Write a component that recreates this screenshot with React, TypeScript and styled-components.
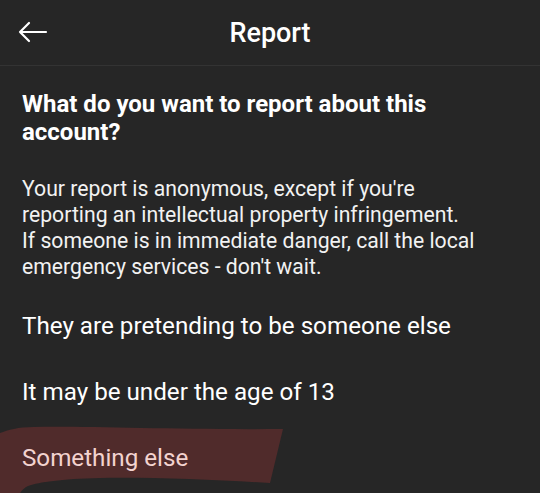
import styled, { createGlobalStyle } from 'styled-components';

const GlobalStyle = createGlobalStyle`
  html, body {
    margin: 0;
    padding: 0;
    background: #262626;
  }
  body {
    font-family: Roboto, "Noto Sans", "Liberation Sans", sans-serif;
    color: #ffffff;
  }
`;

const Screen = styled.div`
  width: 540px;
  height: 493px;
  overflow: hidden;
  background: #262626;
  display: flex;
  flex-direction: column;
`;

const Header = styled.header`
  position: relative;
  height: 65px;
  display: flex;
  align-items: center;
  justify-content: center;
  border-bottom: 1px solid #333333;
  flex-shrink: 0;
`;

const BackButton = styled.button`
  position: absolute;
  left: 14px;
  top: 16px;
  width: 36px;
  height: 32px;
  padding: 0;
  border: none;
  background: none;
  display: flex;
  align-items: center;
  justify-content: center;
  color: #ffffff;
`;

const HeaderTitle = styled.h1`
  margin: 0;
  font-size: 27px;
  font-weight: 500;
`;

const Body = styled.main`
  padding: 24px 22px 0;
  display: flex;
  flex-direction: column;
`;

const Question = styled.h2`
  margin: 0;
  font-size: 24px;
  font-weight: 700;
  line-height: 28px;
`;

const Notice = styled.p`
  margin: 30px 0 0;
  font-size: 21.2px;
  line-height: 26px;
  color: #f2f2f2;
`;

const Options = styled.ul`
  list-style: none;
  margin: 13px 0 0;
  padding: 0;
  display: flex;
  flex-direction: column;
`;

const Option = styled.li<{ $marked?: boolean }>`
  position: relative;
  height: 66px;
  display: flex;
  align-items: center;
  font-size: 24.2px;
  color: ${({ $marked }) => ($marked ? '#f3d3cf' : '#ffffff')};
`;

const Marker = styled.svg`
  position: absolute;
  left: -22px;
  top: 0;
  width: 300px;
  height: 70px;
  pointer-events: none;
`;

const OptionText = styled.span`
  position: relative;
`;

const ArrowIcon = () => (
  <svg width="32" height="24" viewBox="0 0 32 24" fill="none">
    <path
      d="M30 12H4M13 3L4 12L13 21"
      stroke="#ffffff"
      strokeWidth="2.2"
      strokeLinecap="round"
      strokeLinejoin="round"
    />
  </svg>
);

const options = [
  'They are pretending to be someone else',
  'It may be under the age of 13',
  'Something else',
];

export default function App() {
  return (
    <>
      <GlobalStyle />
      <Screen>
        <Header>
          <BackButton aria-label="Back">
            <ArrowIcon />
          </BackButton>
          <HeaderTitle>Report</HeaderTitle>
        </Header>
        <Body>
          <Question>
            What do you want to report about this
            <br />
            account?
          </Question>
          <Notice>
            Your report is anonymous, except if you're
            <br />
            reporting an intellectual property infringement.
            <br />
            If someone is in immediate danger, call the local
            <br />
            emergency services - don't wait.
          </Notice>
          <Options>
            {options.map((text, i) => {
              const marked = i === options.length - 1;
              return (
                <Option key={text} $marked={marked}>
                  {marked && (
                    <Marker viewBox="0 0 300 70">
                      <path
                        d="M0 8 C8 5 18 2 34 2 C90 1 180 5 283 4 L270 58 C220 55 150 52 100 53 C60 54 40 57 28 61 C24 63 21 66 19 70 L0 70 Z"
                        fill="#502b2b"
                      />
                    </Marker>
                  )}
                  <OptionText>{text}</OptionText>
                </Option>
              );
            })}
          </Options>
        </Body>
      </Screen>
    </>
  );
}
